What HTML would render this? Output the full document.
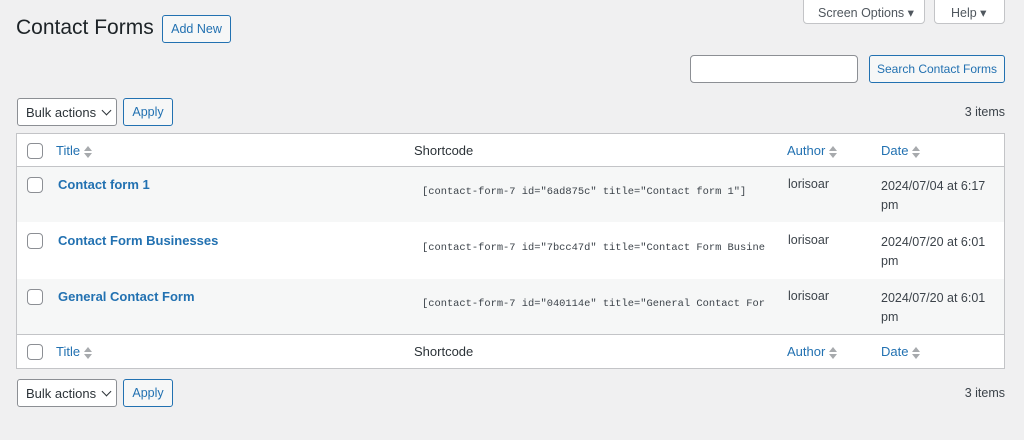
<!DOCTYPE html>
<html><head><style>
*{box-sizing:border-box;margin:0;padding:0}
body{width:1024px;height:440px;background:#f0f0f1;font-family:"Liberation Sans",sans-serif;font-size:13px;color:#3c434a;position:relative;overflow:hidden}
.a{position:absolute;white-space:nowrap}
.btn{position:absolute;white-space:nowrap;border:1px solid #2271b1;color:#2271b1;background:#f6f7f7;border-radius:3px;font-size:12.5px;display:flex;align-items:center;justify-content:center}
.sl{position:absolute;white-space:nowrap;border:1px solid #8c8f94;background:#fff;border-radius:3px;font-size:13px;color:#2c3338;padding-left:8px;display:flex;align-items:center}
.cb{position:absolute;width:16px;height:16px;border:1px solid #8c8f94;border-radius:4px;background:#fff}
.lnk{color:#2271b1;font-size:13px}
.b{font-weight:bold}
.mono{font-family:"Liberation Mono",monospace;font-size:10.4px;color:#3c434a}
.sort{display:inline-block;vertical-align:middle;margin-left:4px;width:8px;height:14px;position:relative}
.sort:before{content:"";position:absolute;left:0;top:1px;border:4px solid transparent;border-bottom:5px solid #a7aaad;border-top:0}
.sort:after{content:"";position:absolute;left:0;top:8px;border:4px solid transparent;border-top:5px solid #a7aaad;border-bottom:0}
.caret{display:inline-block;width:7px;height:7px;border-right:1.5px solid #2c3338;border-bottom:1.5px solid #2c3338;transform:rotate(45deg);margin-left:7px;margin-top:-4px}
.tc{font-size:12.5px;color:#3c434a}
</style></head><body>
<div class="a" style="left:803px;top:-4px;width:122px;height:28px;background:#fff;border:1px solid #c3c4c7;border-radius:0 0 4px 4px;font-size:12.5px;color:#50575e;padding:8px 0 0 14px">Screen Options ▾</div>
<div class="a" style="left:934px;top:-4px;width:71px;height:28px;background:#fff;border:1px solid #c3c4c7;border-radius:0 0 4px 4px;font-size:12.5px;color:#50575e;padding:8px 0 0 16px">Help ▾</div>
<div class="a" style="left:16px;top:16px;font-size:21px;color:#1d2327">Contact Forms</div>
<div class="btn" style="left:162px;top:15px;width:69px;height:28px">Add New</div>
<div class="a" style="left:690px;top:55px;width:168px;height:28px;background:#fff;border:1px solid #8c8f94;border-radius:4px"></div>
<div class="btn" style="left:869px;top:55px;width:136px;height:28px;font-size:12px">Search Contact Forms</div>
<div class="sl" style="left:17px;top:98px;width:100px;height:28px">Bulk actions<span class="caret"></span></div>
<div class="btn" style="left:123px;top:98px;width:50px;height:28px">Apply</div>
<div class="a tc" style="right:19px;top:105px">3 items</div>

<div class="a" style="left:16px;top:133px;width:989px;height:236px;background:#fff;border:1px solid #c3c4c7"></div>
<div class="a" style="left:17px;top:166px;width:987px;height:1px;background:#c3c4c7"></div>
<div class="a" style="left:17px;top:167px;width:987px;height:55px;background:#f6f7f7"></div>
<div class="a" style="left:17px;top:279px;width:987px;height:55px;background:#f6f7f7"></div>
<div class="a" style="left:17px;top:334px;width:987px;height:1px;background:#c3c4c7"></div>

<div class="cb" style="left:27px;top:143px"></div>
<div class="a lnk" style="left:56px;top:143px">Title<span class="sort"></span></div>
<div class="a" style="left:414px;top:143px;font-size:13px;color:#2c3338">Shortcode</div>
<div class="a lnk" style="left:787px;top:143px">Author<span class="sort"></span></div>
<div class="a lnk" style="left:881px;top:143px">Date<span class="sort"></span></div>

<div class="cb" style="left:27px;top:177px"></div>
<div class="a lnk b" style="left:58px;top:177px">Contact form 1</div>
<div class="a mono" style="left:422px;top:186px">[contact-form-7 id="6ad875c" title="Contact form 1"]</div>
<div class="a tc" style="left:788px;top:177px">lorisoar</div>
<div class="a tc" style="left:881px;top:177px;line-height:19px">2024/07/04 at 6:17<br>pm</div>

<div class="cb" style="left:27px;top:233px"></div>
<div class="a lnk b" style="left:58px;top:233px">Contact Form Businesses</div>
<div class="a mono" style="left:422px;top:242px">[contact-form-7 id="7bcc47d" title="Contact Form Busine</div>
<div class="a tc" style="left:788px;top:233px">lorisoar</div>
<div class="a tc" style="left:881px;top:233px;line-height:19px">2024/07/20 at 6:01<br>pm</div>

<div class="cb" style="left:27px;top:289px"></div>
<div class="a lnk b" style="left:58px;top:289px">General Contact Form</div>
<div class="a mono" style="left:422px;top:298px">[contact-form-7 id="040114e" title="General Contact For</div>
<div class="a tc" style="left:788px;top:289px">lorisoar</div>
<div class="a tc" style="left:881px;top:289px;line-height:19px">2024/07/20 at 6:01<br>pm</div>

<div class="cb" style="left:27px;top:344px"></div>
<div class="a lnk" style="left:56px;top:344px">Title<span class="sort"></span></div>
<div class="a" style="left:414px;top:344px;font-size:13px;color:#2c3338">Shortcode</div>
<div class="a lnk" style="left:787px;top:344px">Author<span class="sort"></span></div>
<div class="a lnk" style="left:881px;top:344px">Date<span class="sort"></span></div>

<div class="sl" style="left:17px;top:379px;width:100px;height:28px">Bulk actions<span class="caret"></span></div>
<div class="btn" style="left:123px;top:379px;width:50px;height:28px">Apply</div>
<div class="a tc" style="right:19px;top:386px">3 items</div>
</body></html>
